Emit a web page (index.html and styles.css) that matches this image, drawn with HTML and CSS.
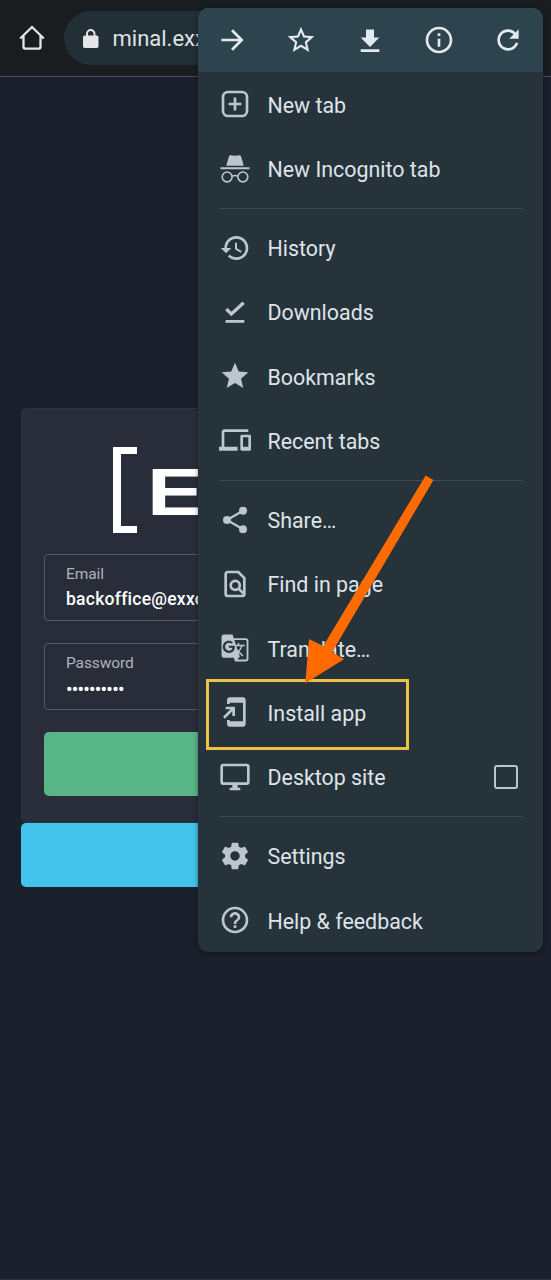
FILE: index.html
```html
<!DOCTYPE html>
<html lang="en">
<head>
<meta charset="utf-8">
<title>Browser menu</title>
<link rel="stylesheet" href="styles.css">
</head>
<body>
<header class="toolbar">
  <svg class="home" viewBox="0 0 26 26"><path d="M1.2 13.5 13 2l11.800 11.500M4.500 11v11a1.600 1.600 0 0 0 1.600 1.600h13.800a1.600 1.600 0 0 0 1.600-1.600V11"/></svg>
  <div class="omnibox">
    <svg class="lock" viewBox="0 0 16 19"><rect y="6.500" width="15.500" height="12.500" rx="1.800"/><path d="M4 8V4.800a3.750 3.750 0 0 1 7.500 0V8"/></svg>
    <span class="url">minal.exxo</span>
  </div>
</header>

<main class="page">
  <section class="card">
    <div class="logo"><span class="bracket"></span><span class="wordmark">E</span></div>
    <div class="field"><span class="label">Email</span><span class="value">backoffice@exxo</span></div>
    <div class="field"><span class="label">Password</span><span class="value dots">••••••••••</span></div>
    <div class="login"></div>
  </section>
  <div class="secondary"></div>
</main>

<nav class="menu">
  <div class="actions">
    <span><svg class="icon" viewBox="0 0 24 24"><path class="line" d="M4 12h15M12 4.700 19.300 12 12 19.300"/></svg></span>
    <span><svg class="icon" viewBox="0 0 24 24"><path d="M22 9.240l-7.190-.62L12 2 9.190 8.630 2 9.240l5.460 4.730L5.820 21 12 17.270 18.180 21l-1.630-7.030L22 9.240zM12 15.400l-3.760 2.270 1-4.280-3.320-2.880 4.380-.38L12 6.100l1.710 4.040 4.380.38-3.320 2.880 1 4.280L12 15.400z"/></svg></span>
    <span><svg class="icon" viewBox="0 0 24 24"><path d="M19 10.200h-4V4.200H9v6H5l7 7 7-7zM5 19v2h14v-2H5z"/></svg></span>
    <span><svg class="icon" viewBox="0 0 24 24"><path d="M11 7h2v2h-2zm0 4h2v6h-2zm1-9C6.480 2 2 6.480 2 12s4.480 10 10 10 10-4.480 10-10S17.520 2 12 2zm0 18c-4.410 0-8-3.590-8-8s3.590-8 8-8 8 3.590 8 8-3.590 8-8 8z"/></svg></span>
    <span><svg class="icon" viewBox="0 0 24 24"><path d="M17.650 6.350C16.200 4.900 14.210 4 12 4c-4.420 0-7.990 3.580-7.990 8s3.570 8 7.990 8c3.730 0 6.840-2.550 7.730-6h-2.080c-.82 2.330-3.040 4-5.650 4-3.310 0-6-2.690-6-6s2.690-6 6-6c1.660 0 3.140.69 4.220 1.780L13 11h7V4l-2.350 2.350z"/></svg></span>
  </div>

  <div class="items">
    <div class="item"><svg class="icon" viewBox="0 0 24 24"><rect class="line" x="3" y="3" width="18" height="18" rx="3.800"/><path class="line" d="M12 7.200v9.600M7.200 12h9.600"/></svg><span class="text">New tab</span></div>
    <div class="item"><svg class="icon" viewBox="0 0 24 24"><path d="M5.400 10.300 7.500 3.200q.3-.9 1.200-.8l3.300.4 3.300-.4q.9-.1 1.200.8l2.100 7.100zM1.100 11.500h21.800V13H1.100z"/><g class="thin"><circle cx="6.100" cy="18.700" r="3.700"/><circle cx="17.900" cy="18.700" r="3.700"/><path d="M9.800 18.300q2.200-1.300 4.400 0"/></g></svg><span class="text">New Incognito tab</span></div>
    <hr class="rule">
    <div class="item"><svg class="icon" viewBox="0 0 24 24"><path d="M13 3c-4.970 0-9 4.030-9 9H1.300l4 4 4-4H6c0-3.870 3.130-7 7-7s7 3.130 7 7-3.130 7-7 7c-1.930 0-3.680-.79-4.940-2.060l-1.420 1.420C8.270 19.990 10.510 21 13 21c4.970 0 9-4.030 9-9s-4.030-9-9-9zm-1 5v5l4.280 2.540.72-1.210-3.500-2.080V8H12z"/></svg><span class="text">History</span></div>
    <div class="item"><svg class="icon" viewBox="0 0 24 24"><path class="check" d="M5.500 9.800 9.300 13.500 18.500 5.100"/><path d="M4.900 18H19v2.100H4.900z"/></svg><span class="text">Downloads</span></div>
    <div class="item"><svg class="icon" viewBox="0 0 24 24"><path d="M12 17.270 18.180 21l-1.640-7.030L22 9.240l-7.190-.61L12 2 9.190 8.630 2 9.240l5.460 4.730L5.820 21z"/></svg><span class="text">Bookmarks</span></div>
    <div class="item"><svg class="icon" viewBox="0 0 24 24"><path d="M4 6h18V4H4c-1.100 0-2 .9-2 2v11H0v3h14v-3H4V6zm19 2h-6c-.55 0-1 .45-1 1v10c0 .55.45 1 1 1h6c.55 0 1-.45 1-1V9c0-.55-.45-1-1-1zm-1 9h-4v-7h4v7z"/></svg><span class="text">Recent tabs</span></div>
    <hr class="rule">
    <div class="item"><svg class="icon" viewBox="0 0 24 24"><path class="link" d="M18 5 6 12l12 7"/><circle cx="18" cy="5" r="3"/><circle cx="6" cy="12" r="3"/><circle cx="18" cy="19" r="3"/></svg><span class="text">Share…</span></div>
    <div class="item"><svg class="icon" viewBox="0 0 24 24"><path class="line" d="M14.500 3H6.500A1.500 1.500 0 0 0 5 4.500v15A1.500 1.500 0 0 0 6.500 21h11a1.500 1.500 0 0 0 1.500-1.500V7.500z"/><circle class="line" cx="12.200" cy="13" r="3.400"/><path class="line" d="m14.600 15.400 4 4"/></svg><span class="text">Find in page</span></div>
    <div class="item"><svg class="icon" viewBox="-1.100 -1.100 26.200 26.200"><path fill-rule="evenodd" d="M21 4H11l-1-3H3c-1.100 0-2 .9-2 2v15c0 1.100.9 2 2 2h8l1 3h9c1.100 0 2-.9 2-2V6c0-1.100-.9-2-2-2zM7 16c-2.760 0-5-2.240-5-5s2.240-5 5-5c1.350 0 2.480.5 3.350 1.300L9.030 8.570c-.38-.36-1.040-.78-2.030-.78-1.740 0-3.150 1.440-3.150 3.210S5.260 14.210 7 14.210c2.010 0 2.840-1.440 2.920-2.410H7v-1.710h4.680c.07.31.12.61.12 1.020C11.800 13.970 9.890 16 7 16zm6.170-5.420h3.700c-.43 1.250-1.110 2.430-2.050 3.470-.31-.35-.6-.72-.86-1.100l-.79-2.370zm8.330 9.920c0 .55-.45 1-1 1H14l2-2.500-1.040-3.100 3.100 3.100.92-.92-3.300-3.250.02-.02c1.130-1.250 1.930-2.690 2.400-4.220H20v-1.300h-4.530V8h-1.290v1.290h-1.440L11.460 5.500h9.040c.55 0 1 .45 1 1v14z"/></svg><span class="text">Translate…</span></div>
    <div class="item install"><svg class="icon" viewBox="0 0 24 24"><path d="M18 1.010 8 1c-1.100 0-2 .9-2 2v3h2V5h10v14H8v-1H6v3c0 1.100.9 2 2 2h10c1.100 0 2-.9 2-2V3c0-1.100-.9-1.990-2-1.990zM10 15h2V8H5v2h3.590L3 15.590 4.410 17 10 11.410V15z"/></svg><span class="text">Install app</span></div>
    <div class="item"><svg class="icon" viewBox="0 0 24 24"><path d="M21 2H3c-1.100 0-2 .9-2 2v12c0 1.100.9 2 2 2h7v2H8v2h8v-2h-2v-2h7c1.100 0 2-.9 2-2V4c0-1.100-.9-2-2-2zm0 14H3V4h18v12z"/></svg><span class="text">Desktop site</span><span class="checkbox"></span></div>
    <hr class="rule">
    <div class="item"><svg class="icon" viewBox="0 0 24 24"><path d="M19.430 12.980c.04-.32.070-.64.070-.98s-.03-.66-.07-.98l2.110-1.650c.19-.15.240-.42.120-.64l-2-3.460c-.12-.22-.39-.3-.61-.22l-2.490 1c-.52-.4-1.080-.73-1.690-.98l-.38-2.650C14.460 2.180 14.250 2 14 2h-4c-.25 0-.46.180-.49.420l-.38 2.650c-.61.250-1.170.590-1.690.980l-2.490-1c-.23-.09-.49 0-.61.220l-2 3.460c-.13.220-.07.490.12.640l2.110 1.650c-.04.320-.07.650-.07.980s.03.660.07.980l-2.110 1.650c-.19.150-.24.420-.12.640l2 3.460c.12.220.39.300.61.220l2.490-1c.52.400 1.080.730 1.690.980l.38 2.650c.03.240.24.420.49.420h4c.25 0 .46-.18.490-.42l.38-2.650c.61-.25 1.170-.59 1.690-.98l2.490 1c.23.090.49 0 .61-.22l2-3.460c.12-.22.070-.49-.12-.64l-2.110-1.650zM12 15.500c-1.930 0-3.500-1.570-3.500-3.500s1.570-3.500 3.500-3.500 3.500 1.570 3.500 3.500-1.570 3.500-3.500 3.500z"/></svg><span class="text">Settings</span></div>
    <div class="item"><svg class="icon" viewBox="0 0 24 24"><path d="M11 18h2v-2h-2v2zm1-16C6.480 2 2 6.480 2 12s4.480 10 10 10 10-4.480 10-10S17.520 2 12 2zm0 18c-4.410 0-8-3.590-8-8s3.590-8 8-8 8 3.590 8 8-3.590 8-8 8zm0-14c-2.210 0-4 1.790-4 4h2c0-1.100.9-2 2-2s2 .9 2 2c0 2-3 1.750-3 5h2c0-2.250 3-2.500 3-5 0-2.210-1.790-4-4-4z"/></svg><span class="text">Help &amp; feedback</span></div>
  </div>
</nav>

<svg class="arrow" viewBox="0 0 130 210"><path d="M125.600 .4 133.500 4.900 32.200 177 44 184.300 5.300 208.300 9 164 23.300 171z"/></svg>
</body>
</html>
```
FILE: styles.css
```css
*, *::after { box-sizing: border-box; }

body {
  position: relative;
  margin: 0;
  height: 1280px;
  overflow: hidden;
  display: flex;
  flex-direction: column;
  background: #1a1f2c;
  border-bottom: 1px solid #2b303c;
  font-family: Roboto, sans-serif;
}

/* Browser toolbar */
.toolbar {
  flex: none;
  height: 77px;
  display: flex;
  align-items: flex-start;
  padding: 11px 160px 0 19px;
  background: #1a1d20;
  border-bottom: 1px solid #4a4e5a;
}
.home {
  width: 26px;
  height: 26px;
  margin: 14px 19px 0 0;
  fill: none;
  stroke: #e4e6e8;
  stroke-width: 2.3;
}
.omnibox {
  flex: 1;
  height: 54px;
  display: flex;
  align-items: center;
  padding-left: 19px;
  background: #232f36;
  border-radius: 27px;
}
.lock { width: 16px; height: 19px; fill: #e4e6e8; }
.lock path { fill: none; stroke: #e4e6e8; stroke-width: 2; }
.url {
  margin: 2px 0 0 12.500px;
  padding-left: 1px;
  font-size: 22px;
  line-height: 28px;
  color: #dfe3e6;
}

/* Login page */
.page { padding: 331px 21px 0; }
.card {
  height: 415px;
  display: flex;
  flex-direction: column;
  padding: 38px 22px 0;
  background: #292d3a;
  border: 1px solid #303440;
  border-radius: 6px;
}
.logo {
  flex: none;
  height: 107px;
  display: flex;
  padding-left: 69px;
}
.bracket {
  width: 24px;
  height: 86px;
  border: solid #fff;
  border-width: 7px 0 7px 8px;
}
.wordmark {
  margin: 7px 0 0 10px;
  font: bold 67px/76px "Liberation Sans", sans-serif;
  color: #fff;
  transform: scaleX(1.28);
  transform-origin: left;
}
.field {
  flex: none;
  height: 67px;
  display: flex;
  flex-direction: column;
  margin-bottom: 22px;
  padding: 7px 21px;
  border: 1px solid #555965;
  border-radius: 4px;
}
.label {
  font-size: 15.500px;
  line-height: 25px;
  letter-spacing: -.1px;
  color: #b0b3bc;
}
.value {
  font-size: 17.500px;
  line-height: 25px;
  font-weight: 500;
  letter-spacing: .25px;
  color: #fff;
}
.dots { font-size: 18.500px; line-height: 28px; letter-spacing: -.7px; }
.login { height: 64px; background: #58b687; border-radius: 5px; }
.secondary { height: 64px; background: #42c4ec; border-radius: 5px; }

/* Overflow menu */
.menu {
  position: absolute;
  left: 198px;
  top: 8px;
  width: 345px;
  height: 944px;
  overflow: hidden;
  background: #26333b;
  border-radius: 10px;
  box-shadow: 0 1px 5px rgba(0, 0, 0, .45);
}
.actions {
  height: 64px;
  display: flex;
  align-items: center;
  padding-right: 1px;
  background: #2d434e;
}
.actions span { flex: 1; display: flex; justify-content: center; }
.icon {
  flex: none;
  width: 32px;
  height: 32px;
  fill: #bcc6ce;
  --stroke: #bcc6ce;
}
.actions .icon { fill: #e3eaee; --stroke: #e3eaee; }
.line { fill: none; stroke: var(--stroke); stroke-width: 2; }
.thin { fill: none; stroke: var(--stroke); stroke-width: 1.200; }
.link { fill: none; stroke: var(--stroke); stroke-width: 1.700; }
.check { fill: none; stroke: var(--stroke); stroke-width: 2.500; }
.items { padding: 0 21px; }
.item {
  position: relative;
  height: 64.250px;
  display: flex;
  align-items: center;
  gap: 16.500px;
  font-size: 21.400px;
  color: #dfe4e8;
}
.text { padding-top: 2px; }
.rule {
  height: 1px;
  margin: 7px 0;
  border: 0;
  background: #3d4a53;
}
.checkbox {
  width: 24px;
  height: 24px;
  margin: 0 4px 0 auto;
  border: 2.500px solid #bcc6ce;
  border-radius: 3px;
}

/* Highlight around the install entry */
.install::after {
  content: "";
  position: absolute;
  left: -13px;
  top: -1.500px;
  width: 203px;
  height: 71px;
  border: 3px solid #ebc244;
}
.arrow {
  position: absolute;
  left: 300px;
  top: 475px;
  width: 130px;
  height: 210px;
  overflow: visible;
  fill: #ff6b00;
}
```
